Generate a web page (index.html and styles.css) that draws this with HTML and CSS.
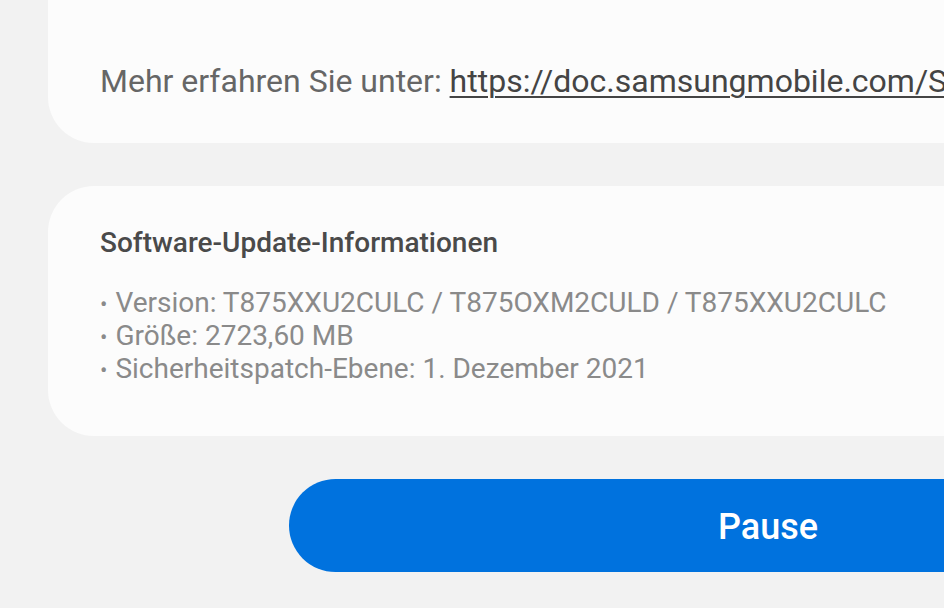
FILE: index.html
```html
<!DOCTYPE html>
<html lang="de">
<head>
  <meta charset="UTF-8">
  <meta name="viewport" content="width=device-width, initial-scale=1.0">
  <title>Software-Update</title>
  <link rel="stylesheet" href="styles.css">
</head>
<body>
  <div class="screen">
    <section class="card card-notes">
      <p class="more">Mehr erfahren Sie unter: <a href="#">https://doc.samsungmobile.com/S</a></p>
    </section>
    <section class="card card-info">
      <h2>Software-Update-Informationen</h2>
      <ul class="info-list">
        <li>Version: T875XXU2CULC / T875OXM2CULD / T875XXU2CULC</li>
        <li>Größe: 2723,60 MB</li>
        <li>Sicherheitspatch-Ebene: 1. Dezember 2021</li>
      </ul>
    </section>
    <div class="actions">
      <button class="btn-pause">Pause</button>
    </div>
  </div>
</body>
</html>
```

FILE: styles.css
```css
:root {
  --bg: #f2f2f2;
  --card: #fcfcfc;
  --text: #666;
  --link: #444;
  --title: #4a4a4a;
  --muted: #8a8a8a;
  --blue: #0072de;
}
html, body {
  margin: 0;
  padding: 0;
}
body {
  font-family: Roboto, "Noto Sans", Arial, sans-serif;
  background: var(--bg);
  width: 944px;
  height: 608px;
  overflow: hidden;
}
.screen {
  padding-left: 48px;
}
.card {
  background: var(--card);
  border-radius: 46px;
  width: 1100px;
  box-sizing: border-box;
  padding-left: 52px;
}
.card-notes {
  margin-top: -60px;
  padding-top: 122px;
  padding-bottom: 43px;
}
.more {
  margin: 0;
  font-size: 32px;
  line-height: 38px;
  color: var(--text);
  white-space: nowrap;
}
.more a {
  color: var(--link);
  text-decoration: underline;
  text-underline-offset: 4px;
  text-decoration-thickness: 2px;
}
.card-info {
  margin-top: 43px;
  padding-top: 40px;
  padding-bottom: 51px;
}
.card-info h2 {
  margin: 0 0 26px;
  font-size: 28px;
  line-height: 34px;
  font-weight: 500;
  color: var(--title);
}
.info-list {
  list-style: none;
  margin: 0;
  padding: 0;
  font-size: 28px;
  line-height: 33px;
  color: var(--muted);
}
.info-list li::before {
  content: "\2022";
  margin-right: 8px;
  font-size: 22px;
  line-height: 1;
}
.actions {
  padding: 43px 0 0 241px;
}
.btn-pause {
  display: block;
  width: 958px;
  height: 93px;
  border: none;
  border-radius: 47px;
  background: var(--blue);
  color: #fff;
  font-family: Roboto, Arial, sans-serif;
  font-size: 36px;
  font-weight: 500;
  padding: 2px 0 0;
}
```
